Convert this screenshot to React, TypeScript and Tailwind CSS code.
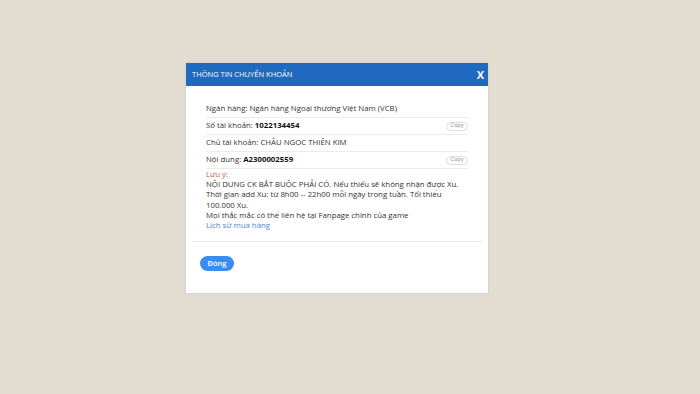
const FONT = { fontFamily: '"Open Sans", "Noto Sans", sans-serif' };

function CopyButton() {
  return (
    <button
      type="button"
      className="h-[9px] w-[22px] rounded-full border border-[#dcdcdc] bg-white text-[5.5px] leading-none text-[#888]"
    >
      Copy
    </button>
  );
}

function Row({ label, value, bold, copy }: { label: string; value: string; bold?: boolean; copy?: boolean }) {
  return (
    <div className="flex h-[17px] items-center justify-between border-b border-[#ececec]">
      <span>
        {label}: {bold ? <b className="font-bold text-[#111]">{value}</b> : value}
      </span>
      {copy ? <CopyButton /> : null}
    </div>
  );
}

export default function App() {
  return (
    <div className="flex h-[394px] w-full justify-start bg-[#e3dcd1] pl-[186px] pt-[63px]" style={FONT}>
      <div className="h-[230px] w-[302px] bg-white shadow-[0_0_3px_rgba(0,0,0,0.08)]">
        <div className="flex h-[23px] items-center justify-between bg-[#1f69c1] pl-[6px] pr-[4px]">
          <span className="text-[7.5px] text-white">THÔNG TIN CHUYỂN KHOẢN</span>
          <span className="text-[11px] font-bold leading-none text-white">X</span>
        </div>
        <div className="px-[20px] pt-[15px] text-[7.8px] text-[#333]">
          <Row label="Ngân hàng" value="Ngân hàng Ngoại thương Việt Nam (VCB)" />
          <Row label="Số tài khoản" value="1022134454" bold copy />
          <Row label="Chủ tài khoản" value="CHÂU NGỌC THIÊN KIM" />
          <Row label="Nội dung" value="A2300002559" bold copy />
          <div className="leading-[10.2px]">
            <div className="text-[#d9534f]">Lưu ý:</div>
            <div>NỘI DUNG CK BẮT BUỘC PHẢI CÓ. Nếu thiếu sẽ không nhận được Xu.</div>
            <div>Thời gian add Xu: từ 8h00 -- 22h00 mỗi ngày trong tuần. Tối thiểu 100.000 Xu.</div>
            <div>Mọi thắc mắc có thể liên hệ tại Fanpage chính của game</div>
            <div className="text-[#4a86d8]">Lịch sử mua hàng</div>
          </div>
        </div>
        <div className="mx-[6px] mt-[11px] border-t border-[#e6e6e6]" />
        <div className="flex px-[14px] pt-[14px]">
          <button
            type="button"
            className="h-[15px] w-[34px] rounded-full bg-[#3a8cf0] text-[7.5px] font-semibold text-white"
          >
            Đóng
          </button>
        </div>
      </div>
    </div>
  );
}
